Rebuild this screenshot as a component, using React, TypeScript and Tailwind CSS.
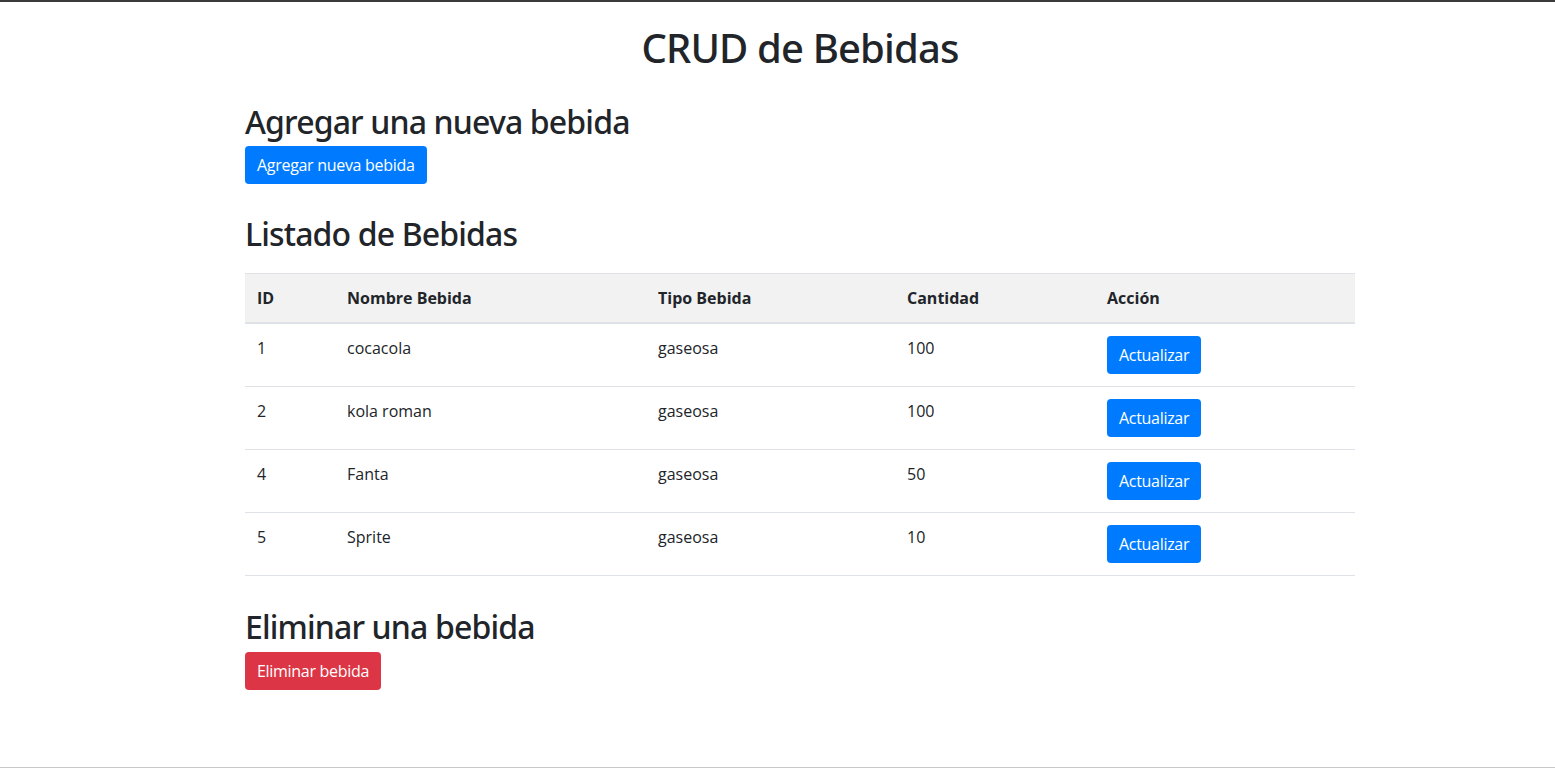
const bebidas = [
  { id: 1, nombre: "cocacola", tipo: "gaseosa", cantidad: 100 },
  { id: 2, nombre: "kola roman", tipo: "gaseosa", cantidad: 100 },
  { id: 4, nombre: "Fanta", tipo: "gaseosa", cantidad: 50 },
  { id: 5, nombre: "Sprite", tipo: "gaseosa", cantidad: 10 },
];

const App = () => {
  return (
    <div className="min-h-[768px] bg-white text-[#212529] border-t-2 border-[#3a3a3a] font-['Open_Sans',sans-serif] flex flex-col">
      <div className="flex-1">
        <div className="w-[1110px] ml-[245px]">
          <h1 className="text-center text-[40px] leading-[48px] font-medium font-['Noto_Sans',sans-serif] tracking-[-0.85px] mt-[22px] mb-2">
            CRUD de Bebidas
          </h1>

          <h2 className="text-[32px] leading-[38px] font-medium font-['Noto_Sans',sans-serif] tracking-[-0.85px] mt-[31px] mb-[5px]">
            Agregar una nueva bebida
          </h2>
          <button className="bg-[#007bff] text-white text-base leading-6 px-3 py-[7px] rounded tracking-[-0.3px]">
            Agregar nueva bebida
          </button>

          <h2 className="text-[32px] leading-[38px] font-medium font-['Noto_Sans',sans-serif] tracking-[-0.85px] mt-[31px] mb-[5px]">
            Listado de Bebidas
          </h2>
          <table className="w-full mt-5 mb-4 border-collapse text-base">
            <thead>
              <tr className="bg-[#f2f2f2] border-t border-[#dee2e6]">
                <th className="w-[90px] text-left font-bold px-3 py-3 border-b-2 border-[#dee2e6]">ID</th>
                <th className="w-[311px] text-left font-bold px-3 py-3 border-b-2 border-[#dee2e6]">Nombre Bebida</th>
                <th className="w-[249px] text-left font-bold px-3 py-3 border-b-2 border-[#dee2e6]">Tipo Bebida</th>
                <th className="w-[200px] text-left font-bold px-3 py-3 border-b-2 border-[#dee2e6]">Cantidad</th>
                <th className="text-left font-bold px-3 py-3 border-b-2 border-[#dee2e6]">Acción</th>
              </tr>
            </thead>
            <tbody>
              {bebidas.map((b) => (
                <tr key={b.id} className="border-b border-[#dee2e6]">
                  <td className="align-top px-3 py-3">{b.id}</td>
                  <td className="align-top px-3 py-3">{b.nombre}</td>
                  <td className="align-top px-3 py-3">{b.tipo}</td>
                  <td className="align-top px-3 py-3">{b.cantidad}</td>
                  <td className="align-top px-3 py-3">
                    <button className="bg-[#007bff] text-white text-base leading-6 px-3 py-[7px] rounded tracking-[-0.3px]">
                      Actualizar
                    </button>
                  </td>
                </tr>
              ))}
            </tbody>
          </table>

          <h2 className="text-[32px] leading-[38px] font-medium font-['Noto_Sans',sans-serif] tracking-[-0.85px] mt-8 mb-[6px]">
            Eliminar una bebida
          </h2>
          <button className="bg-[#dc3545] text-white text-base leading-6 px-3 py-[7px] rounded tracking-[-0.3px]">
            Eliminar bebida
          </button>
        </div>
      </div>
      <div className="h-px bg-[#c8c8c8]" />
    </div>
  );
};

export default App;
